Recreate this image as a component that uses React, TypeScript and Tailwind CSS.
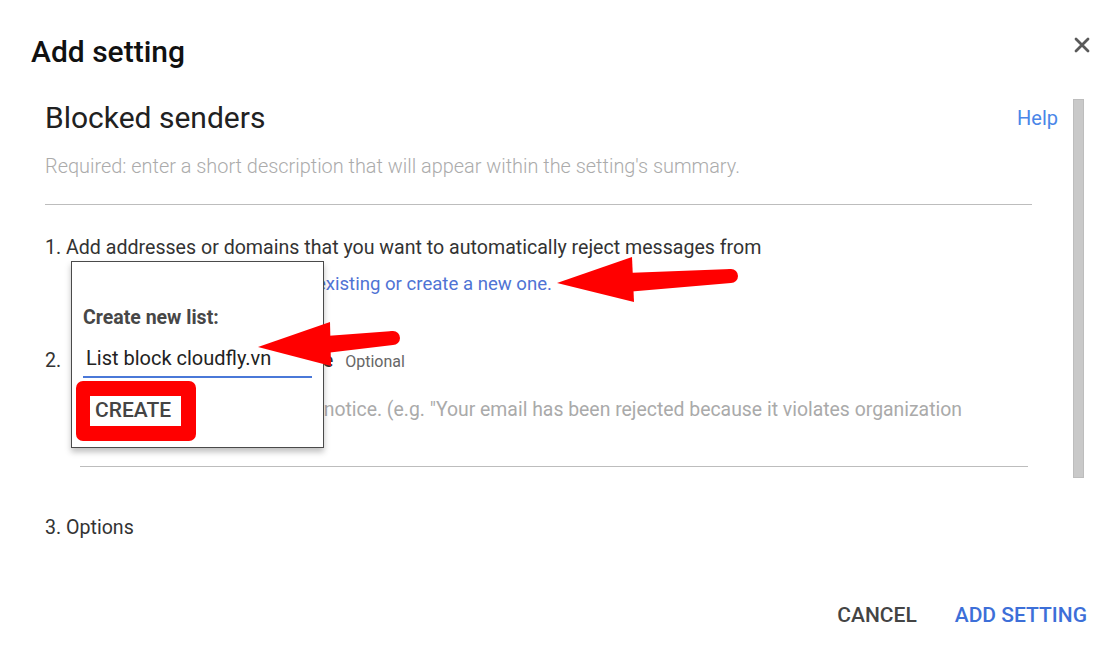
import React from 'react'

function CloseIcon() {
  return (
    <svg width="16" height="16" viewBox="0 0 16 16" className="block">
      <path d="M2 2L14 14M14 2L2 14" stroke="#5a5a5a" strokeWidth="2.8" strokeLinecap="round" />
    </svg>
  )
}

// red annotation arrows drawn over the screenshot
function Arrows() {
  return (
    <svg className="pointer-events-none absolute left-0 top-0" width="1110" height="655" viewBox="0 0 1110 655">
      {/* arrow to the "create a new one" link */}
      <polygon points="557,283 632,257 634,302" fill="#ff0000" />
      <polygon points="626,273 731,269 731,283 626,292" fill="#ff0000" />
      <circle cx="731" cy="276" r="7" fill="#ff0000" />
      {/* arrow to the list name input */}
      <polygon points="258,347 330,322 331,366" fill="#ff0000" />
      <polygon points="326,336 393,331 393,345 326,353" fill="#ff0000" />
      <circle cx="393" cy="338" r="7" fill="#ff0000" />
    </svg>
  )
}

function CreateListPopup() {
  return (
    <div className="absolute left-[71px] top-[261px] h-[187px] w-[253px] border-[1.5px] border-[#4a4a4a] bg-white shadow-[0_4px_6px_rgba(0,0,0,0.25)]">
      <div className="pl-[11px] pt-[44px] text-[19.5px] font-bold leading-[24px] text-[#474747]">Create new list:</div>
      <div className="mx-[11px] mt-[16px] border-b-2 border-[#4a78d8] pb-[6px] pl-[3px] text-[20px] leading-[24px] text-[#222]">
        List block cloudfly.vn
      </div>
      <div className="ml-[4px] mt-[3px] h-[60px] w-[120px] rounded-[7px] bg-[#ff0000] pl-[14px] pt-[15px]">
        <div className="flex h-[30px] w-[91px] items-center bg-white pl-[5px] text-[21px] font-medium text-[#444]">
          CREATE
        </div>
      </div>
    </div>
  )
}

export default function App() {
  return (
    <div className="relative h-[655px] w-[1110px] overflow-hidden bg-white font-['Roboto','Liberation_Sans',sans-serif]">
      {/* Header */}
      <div className="flex items-start justify-between pl-[31px] pr-[20px] pt-[34px]">
        <h1 className="text-[30px] font-medium leading-[36px] text-[#111]">Add setting</h1>
        <div className="pt-[3px]">
          <CloseIcon />
        </div>
      </div>

      {/* Body */}
      <div className="mt-[29px] flex">
        <div className="ml-[45px] w-[1013px]">
          <div className="flex items-start justify-between">
            <h2 className="text-[30px] leading-[38px] text-[#212121]">Blocked senders</h2>
            <a className="pt-[7px] text-[20px] leading-[24px] text-[#4a86e8]">Help</a>
          </div>
          <div className="mt-[18px] mr-[26px] border-b border-[#bdbdbd] pb-[25px] text-[19.9px] font-light leading-[24px] text-[#ababab]">
            Required: enter a short description that will appear within the setting's summary.
          </div>

          <div className="mt-[31px] whitespace-nowrap text-[19.6px] leading-[24px] text-[#333]">
            1. Add addresses or domains that you want to automatically reject messages from
          </div>
          <div className="mt-[12px] w-[507px] whitespace-nowrap text-right text-[18.6px] leading-[24px] text-[#4f73d4]">
            Use existing or create a new one.
          </div>

          <div className="mt-[53px] flex items-baseline whitespace-nowrap text-[19.6px] leading-[24px] text-[#333]">
            <span>2.</span>
            <span className="w-[272px] text-right font-medium">Add custom rejection notice</span>
            <span className="ml-[12px] text-[16px] text-[#666]">Optional</span>
          </div>
          <div className="ml-[35px] mr-[30px] mt-[24px] border-b border-[#bdbdbd] pb-[44px]">
            <div className="whitespace-nowrap pr-[66px] text-right text-[19.4px] leading-[24px] text-[#aaa]">
              Enter the rejection notice. (e.g. "Your email has been rejected because it violates organization
            </div>
          </div>

          <div className="mt-[49px] text-[19.6px] leading-[24px] text-[#333]">3. Options</div>
        </div>
        <div className="ml-[15px] h-[379px] w-[11px] border border-[#bdbdbd] bg-[#c9c9c9]" />
      </div>

      {/* Footer */}
      <div className="absolute bottom-[26px] right-[23px] flex items-center gap-[38px] text-[21px] font-medium leading-[28px]">
        <button className="text-[#444]">CANCEL</button>
        <button className="text-[#3d6fd8]">ADD SETTING</button>
      </div>

      <CreateListPopup />
      <Arrows />
    </div>
  )
}
